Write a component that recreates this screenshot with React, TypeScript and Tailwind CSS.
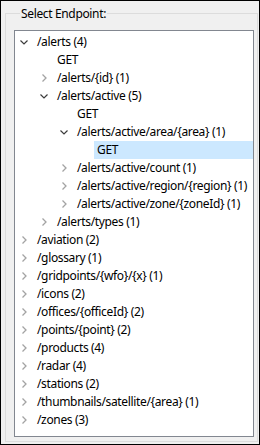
import React from "react";

type Node = { label: string; level: number; state: "open" | "closed" | "leaf"; selected?: boolean };

const rows: Node[] = [
  { label: "/alerts (4)", level: 0, state: "open" },
  { label: "GET", level: 1, state: "leaf" },
  { label: "/alerts/{id} (1)", level: 1, state: "closed" },
  { label: "/alerts/active (5)", level: 1, state: "open" },
  { label: "GET", level: 2, state: "leaf" },
  { label: "/alerts/active/area/{area} (1)", level: 2, state: "open" },
  { label: "GET", level: 3, state: "leaf", selected: true },
  { label: "/alerts/active/count (1)", level: 2, state: "closed" },
  { label: "/alerts/active/region/{region} (1)", level: 2, state: "closed" },
  { label: "/alerts/active/zone/{zoneId} (1)", level: 2, state: "closed" },
  { label: "/alerts/types (1)", level: 1, state: "closed" },
  { label: "/aviation (2)", level: 0, state: "closed" },
  { label: "/glossary (1)", level: 0, state: "closed" },
  { label: "/gridpoints/{wfo}/{x} (1)", level: 0, state: "closed" },
  { label: "/icons (2)", level: 0, state: "closed" },
  { label: "/offices/{officeId} (2)", level: 0, state: "closed" },
  { label: "/points/{point} (2)", level: 0, state: "closed" },
  { label: "/products (4)", level: 0, state: "closed" },
  { label: "/radar (4)", level: 0, state: "closed" },
  { label: "/stations (2)", level: 0, state: "closed" },
  { label: "/thumbnails/satellite/{area} (1)", level: 0, state: "closed" },
  { label: "/zones (3)", level: 0, state: "closed" },
];

const indents = ["w-[1px]", "w-[21px]", "w-[41px]", "w-[61px]"];

function Chevron({ state }: { state: Node["state"] }) {
  if (state === "leaf") return <span className="w-4 h-4 shrink-0" />;
  return (
    <svg width="16" height="16" viewBox="0 0 16 16" className="shrink-0" fill="none">
      {state === "open" ? (
        <polyline points="4.5,6.5 8,10 11.5,6.5" stroke="#3c3c3c" strokeWidth="1.2" />
      ) : (
        <polyline points="6.5,4.5 10,8 6.5,11.5" stroke="#a3a3a3" strokeWidth="1.3" />
      )}
    </svg>
  );
}

export default function App() {
  return (
    <div
      className="w-[260px] h-[445px] border border-black bg-[#f0f0f0] pt-[4px] pl-[4px] pr-[1px] pb-[2px] flex flex-col text-[12px] tracking-[-0.35px] text-black"
      style={{ fontFamily: '"Segoe UI", "Noto Sans", sans-serif' }}
    >
      <fieldset className="flex-1 flex flex-col border border-[#dcdcdc] pl-[8px] pr-[3px] pb-[4px] min-h-0">
        <legend className="ml-[6px] px-[1px] leading-[17px]">Select Endpoint:</legend>
        <div className="flex-1 mt-[8px] border border-[#828790] bg-white pt-[2px] overflow-hidden">
          {rows.map((r, i) => (
            <div key={i} className="flex items-center h-[18px]">
              <span className={`${indents[r.level]} shrink-0`} />
              <Chevron state={r.state} />
              <span
                className={`ml-[2px] pl-[3px] flex-1 h-[18px] leading-[18px] whitespace-nowrap ${
                  r.selected ? "bg-[#cce8ff]" : ""
                }`}
              >
                {r.label}
              </span>
            </div>
          ))}
        </div>
      </fieldset>
    </div>
  );
}
